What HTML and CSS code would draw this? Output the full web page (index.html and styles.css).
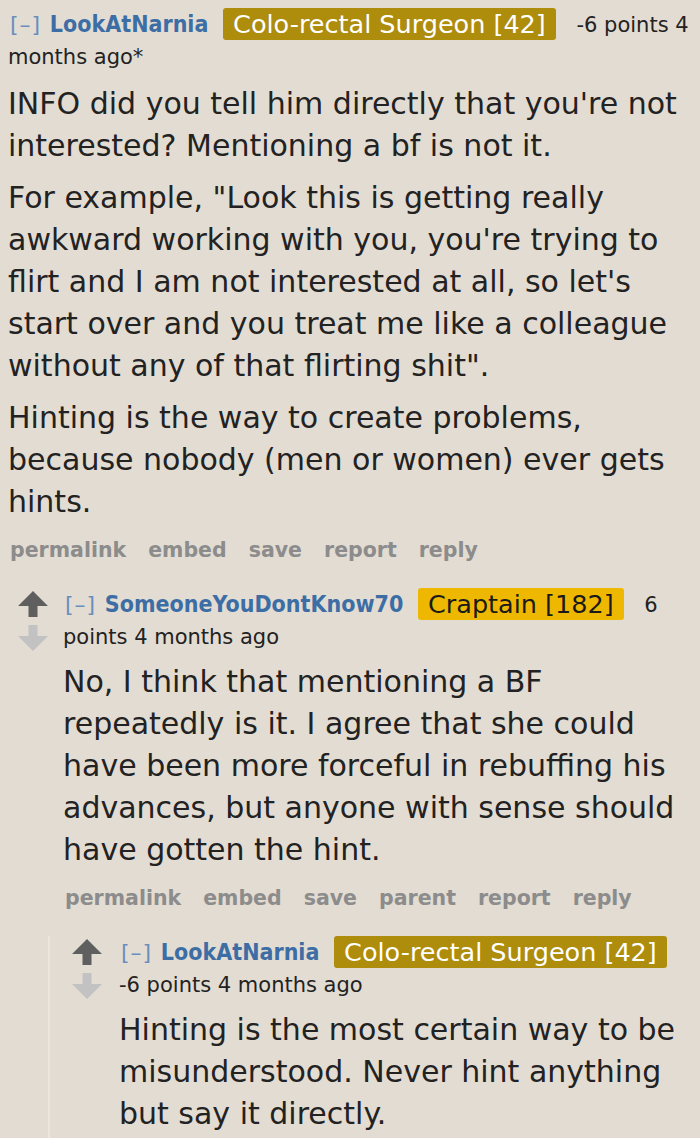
FILE: index.html
```html
<!DOCTYPE html>
<html>
<head>
<meta charset="utf-8">
<link rel="stylesheet" href="styles.css">
</head>
<body>
<div class="thread">
  <div class="comment top">
    <div class="entry">
      <p class="tagline"><span class="expand">[–]</span> <span class="author">LookAtNarnia</span> <span class="flair gold">Colo-rectal Surgeon [42]</span> <span class="score">-6 points</span> 4 months ago*</p>
      <div class="md">
        <p>INFO did you tell him directly that you're not interested? Mentioning a bf is not it.</p>
        <p>For example, "Look this is getting really awkward working with you, you're trying to flirt and I am not interested at all, so let's start over and you treat me like a colleague without any of that flirting shit".</p>
        <p>Hinting is the way to create problems, because nobody (men or women) ever gets hints.</p>
      </div>
      <ul class="buttons"><li>permalink</li><li>embed</li><li>save</li><li>report</li><li>reply</li></ul>
    </div>
  </div>

  <div class="comment child1">
    <div class="arrows">
      <svg class="arrow" viewBox="0 0 30 26" width="30" height="26"><path d="M15 0 L30 15 L19.5 15 L19.5 26 L10.5 26 L10.5 15 L0 15 Z" fill="#5f5f5f"/></svg>
      <svg class="arrow" viewBox="0 0 30 26" width="30" height="26"><path d="M10.5 0 L19.5 0 L19.5 11 L30 11 L15 26 L0 11 L10.5 11 Z" fill="#c2c2c2"/></svg>
    </div>
    <div class="entry">
      <p class="tagline"><span class="expand">[–]</span> <span class="author">SomeoneYouDontKnow70</span> <span class="flair yellow">Craptain [182]</span> <span class="score">6 points</span> 4 months ago</p>
      <div class="md">
        <p>No, I think that mentioning a BF repeatedly is it. I agree that she could have been more forceful in rebuffing his advances, but anyone with sense should have gotten the hint.</p>
      </div>
      <ul class="buttons"><li>permalink</li><li>embed</li><li>save</li><li>parent</li><li>report</li><li>reply</li></ul>
    </div>
  </div>

  <div class="child-wrap">
    <div class="comment child2">
      <div class="arrows">
        <svg class="arrow" viewBox="0 0 30 26" width="30" height="26"><path d="M15 0 L30 15 L19.5 15 L19.5 26 L10.5 26 L10.5 15 L0 15 Z" fill="#5f5f5f"/></svg>
        <svg class="arrow" viewBox="0 0 30 26" width="30" height="26"><path d="M10.5 0 L19.5 0 L19.5 11 L30 11 L15 26 L0 11 L10.5 11 Z" fill="#c2c2c2"/></svg>
      </div>
      <div class="entry">
        <p class="tagline"><span class="expand">[–]</span> <span class="author">LookAtNarnia</span> <span class="flair gold">Colo-rectal Surgeon [42]</span> <span class="score">-6 points</span> 4 months ago</p>
        <div class="md">
          <p>Hinting is the most certain way to be misunderstood. Never hint anything but say it directly.</p>
        </div>
      </div>
    </div>
  </div>
</div>
</body>
</html>
```

FILE: styles.css
```css
html, body {
  margin: 0;
  padding: 0;
  background: #e3dcd2;
}
body {
  font-family: "DejaVu Sans", Verdana, sans-serif;
  color: #222;
  overflow: hidden;
}
.thread {
  padding: 8px 0 0 8px;
}
.comment {
  display: flex;
  align-items: flex-start;
}
.entry {
  flex: 1;
  min-width: 0;
}
.tagline {
  margin: 0;
  font-family: "DejaVu Sans", Verdana, sans-serif;
  font-size: 21px;
  line-height: 32px;
  color: #222;
}
.expand {
  color: #6a8fbf;
  font-size: 22px;
  letter-spacing: 1px;
  margin-left: 2px;
}
.author {
  color: #3c6ea5;
  font-weight: bold;
  font-stretch: condensed;
  font-size: 23px;
  margin-left: 2px;
}
.flair {
  display: inline-block;
  font-size: 25.5px;
  line-height: 32px;
  padding: 0 10px;
  border-radius: 3px;
  margin: 0 14px 0 8px;
  vertical-align: top;
}
.flair.gold {
  background: #ae8c0c;
  color: #fff;
}
.flair.yellow {
  background: #efb800;
  color: #1a1a1a;
}
.md {
  font-size: 30px;
  line-height: 42px;
  color: #222;
}
.md p {
  margin: 8px 0 0;
}
.md p + p {
  margin-top: 10px;
}
.top .md p:first-child {
  margin-top: 10px;
}
.buttons {
  list-style: none;
  margin: 10px 0 0;
  padding: 0 0 0 2px;
  display: flex;
  gap: 22px;
  font-weight: bold;
  font-size: 20.5px;
  line-height: 34px;
  color: #8c8c8c;
}
.child1 {
  margin-top: 21px;
  padding-left: 10px;
}
.arrows {
  display: flex;
  flex-direction: column;
  gap: 8px;
  padding-top: 3px;
  width: 45px;
  flex-shrink: 0;
}
.child-wrap {
  margin: 21px 0 0 40px;
  border-left: 2px solid #ebe6de;
  padding-left: 22px;
  padding-bottom: 40px;
}
.child-wrap .arrows {
  width: 47px;
}
```
